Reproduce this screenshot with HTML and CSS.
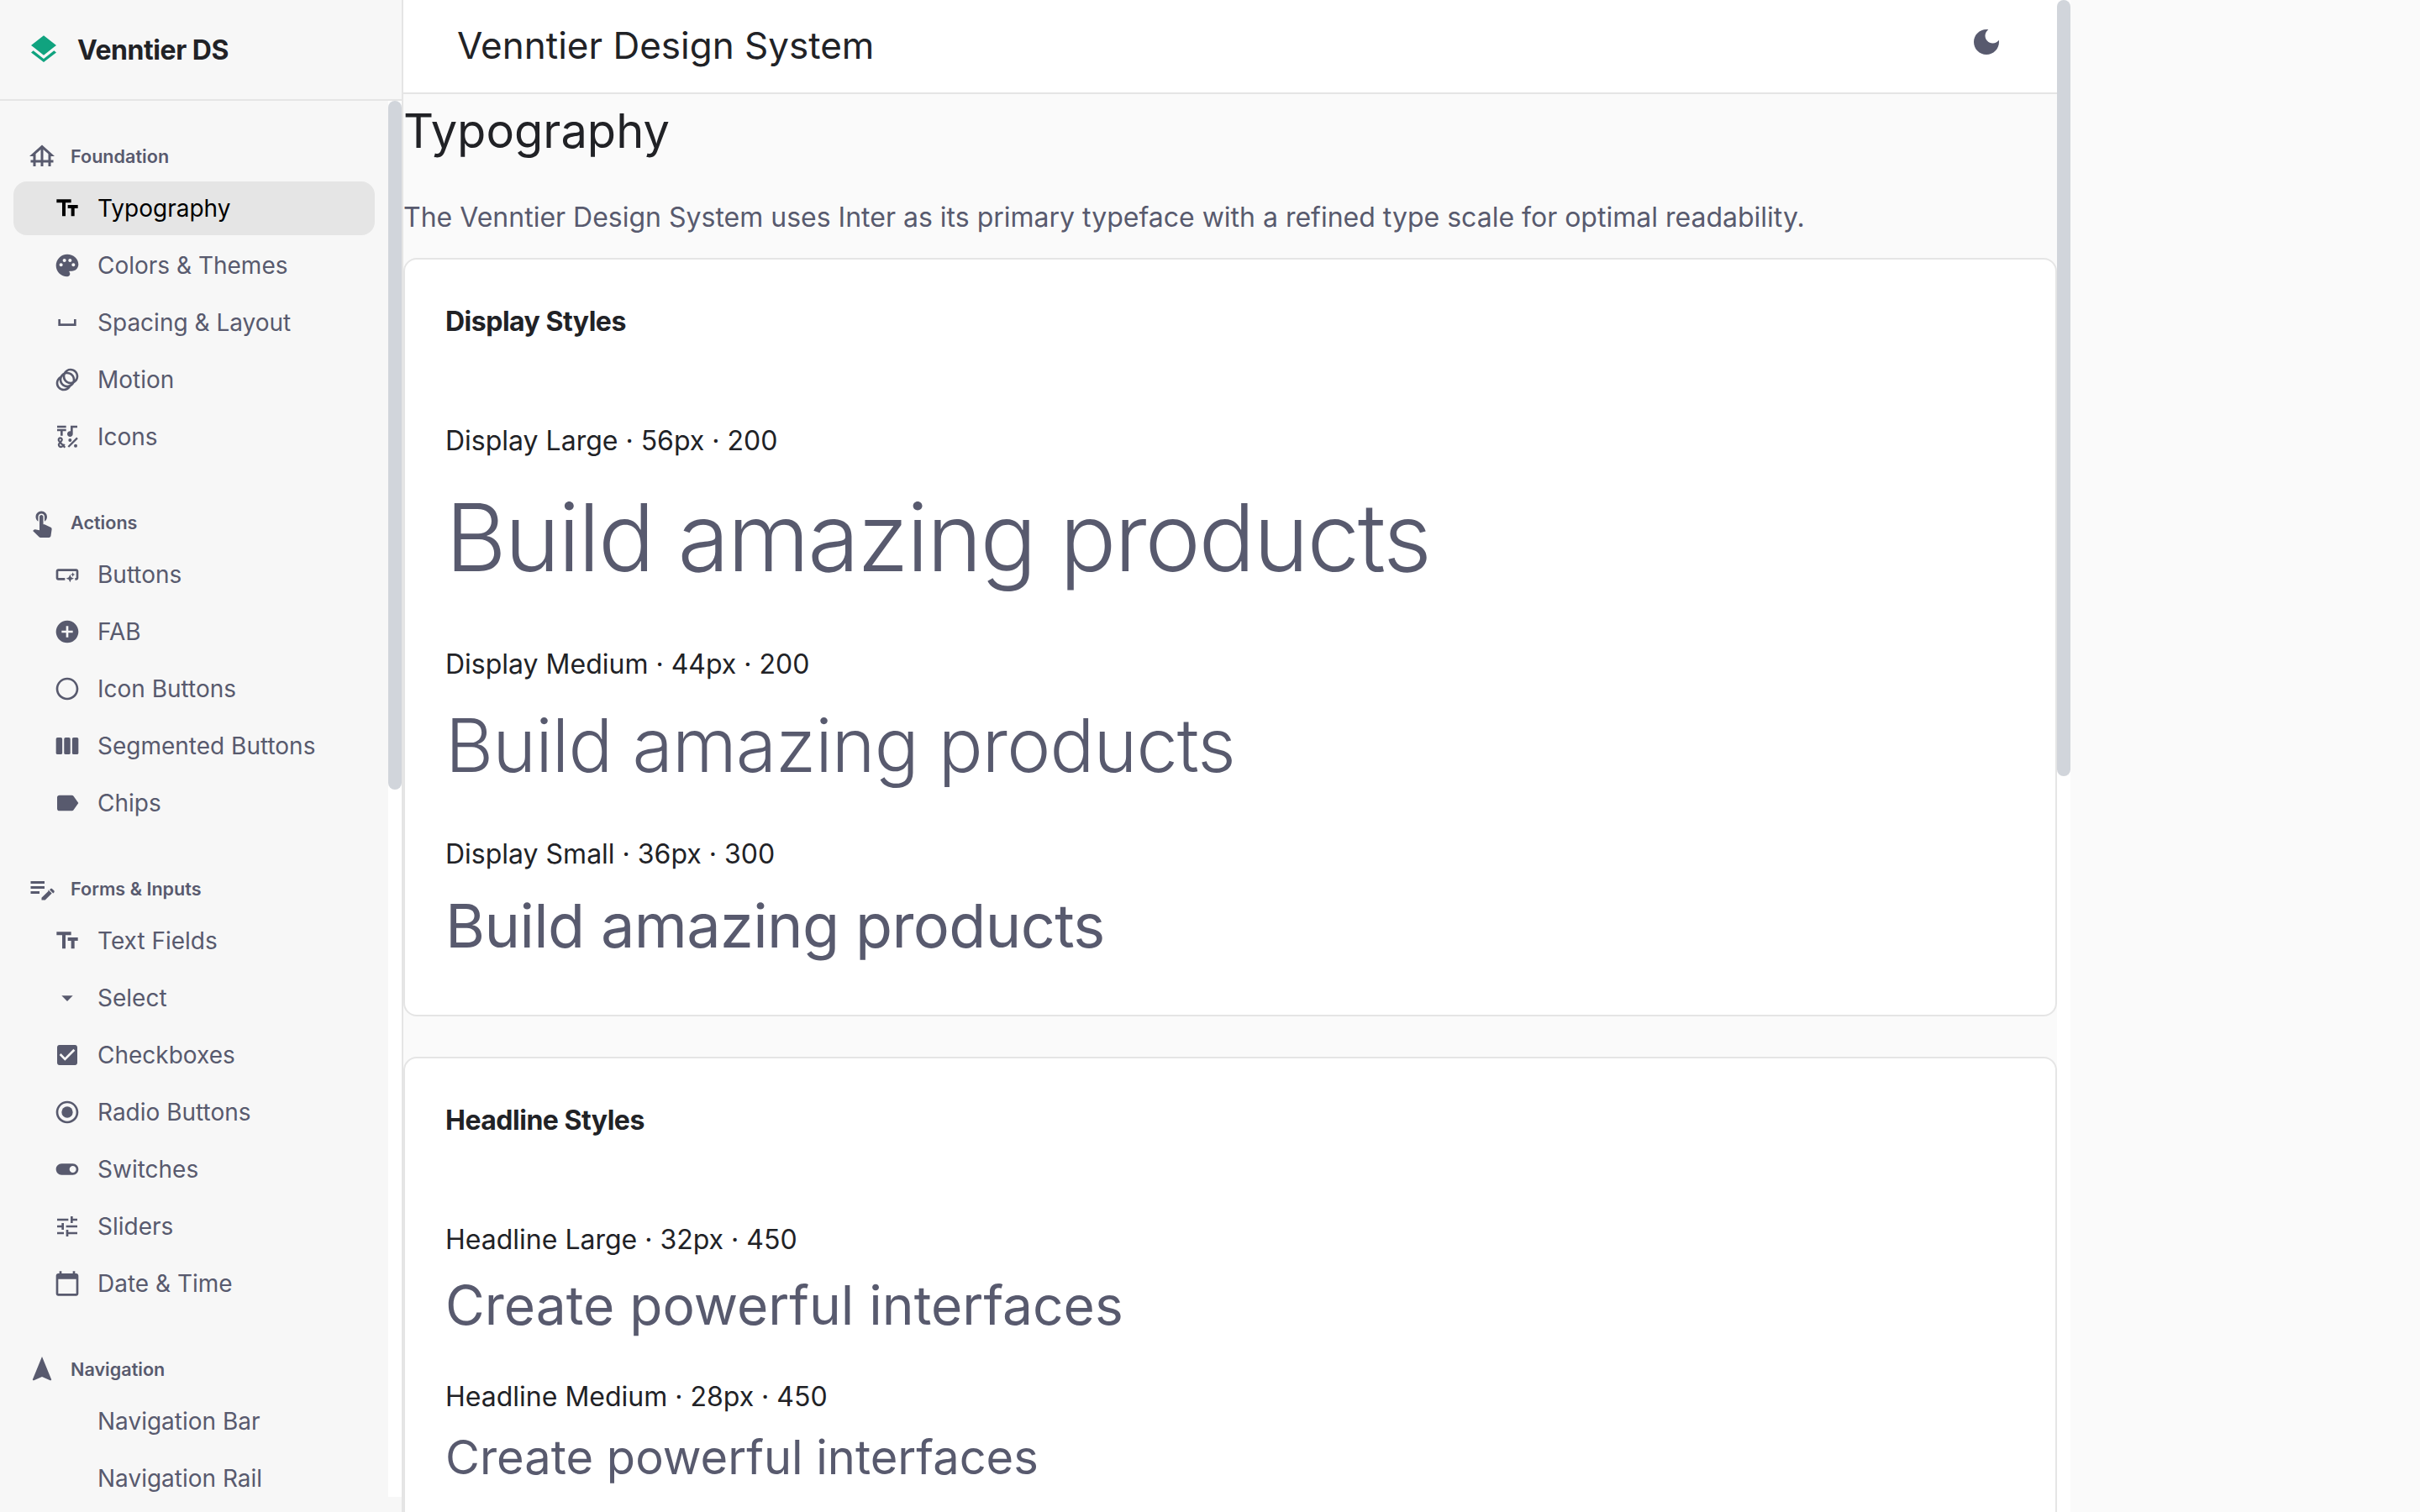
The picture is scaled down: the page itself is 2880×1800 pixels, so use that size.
FILE: index.html
```html
<!DOCTYPE html>
<html lang="en">
<head>
  <meta charset="UTF-8">
  <meta name="viewport" content="width=device-width, initial-scale=1.0">
  <title>Venntier Design System</title>
  <link rel="stylesheet" href="styles.css">
</head>
<body>
  <aside class="sidebar">
    <div class="brand">
      <svg class="brand-icon" viewBox="0 0 24 24"><path d="M11.99 18.54l-7.37-5.73L3 14.07l9 7 9-7-1.63-1.27-7.38 5.74zM12 16l7.36-5.73L21 9l-9-7-9 7 1.63 1.27L12 16z"/></svg>
      <span class="brand-name">Venntier DS</span>
    </div>
    <div class="sidebar-body">
      <nav class="nav">
        <section class="nav-section">
          <div class="nav-label"><svg class="label-icon" viewBox="0 0 24 24"><path d="M19 12h3L12 3 2 12h3v3H3v2h2v3h2v-3h4v3h2v-3h4v3h2v-3h2v-2h-2v-3zM7 15v-4.81l4-3.6V15H7zm6 0V6.59l4 3.6V15h-4z"/></svg>Foundation</div>
          <a class="nav-item active"><svg class="icon" viewBox="0 0 24 24"><path d="M2.5 4v3h5v12h3V7h5V4h-13zm19 5h-9v3h3v7h3v-7h3V9z"/></svg>Typography</a>
          <a class="nav-item"><svg class="icon" viewBox="0 0 24 24"><path d="M12 2C6.49 2 2 6.49 2 12s4.49 10 10 10c1.38 0 2.5-1.12 2.5-2.5 0-.61-.23-1.2-.64-1.67-.08-.1-.13-.21-.13-.33 0-.28.22-.5.5-.5H16c3.31 0 6-2.69 6-6 0-4.96-4.49-9-10-9zm5.5 11c-.83 0-1.5-.67-1.5-1.5s.67-1.5 1.5-1.5 1.5.67 1.5 1.5-.67 1.5-1.5 1.5zm-3-4c-.83 0-1.5-.67-1.5-1.5S13.67 6 14.5 6s1.5.67 1.5 1.5S15.33 9 14.5 9zM5 11.5c0-.83.67-1.5 1.5-1.5s1.5.67 1.5 1.5S7.33 13 6.5 13 5 12.33 5 11.5zm6-4c0 .83-.67 1.5-1.5 1.5S8 8.33 8 7.5 8.67 6 9.5 6s1.5.67 1.5 1.5z"/></svg>Colors &amp; Themes</a>
          <a class="nav-item"><svg class="icon" viewBox="0 0 24 24"><path d="M18 9v4H6V9H4v6h16V9h-2z"/></svg>Spacing &amp; Layout</a>
          <a class="nav-item"><svg class="icon" viewBox="0 0 24 24"><path d="M15 2c-2.71 0-5.05 1.54-6.22 3.78-1.28.67-2.34 1.72-3 3C3.54 9.95 2 12.29 2 15c0 3.87 3.13 7 7 7 2.71 0 5.05-1.54 6.22-3.78 1.28-.67 2.34-1.72 3-3C20.46 14.05 22 11.71 22 9c0-3.87-3.13-7-7-7zM9 20c-2.76 0-5-2.24-5-5 0-1.12.37-2.16 1-3 0 3.87 3.13 7 7 7-.84.63-1.88 1-3 1zm3-3c-2.76 0-5-2.24-5-5 0-1.12.37-2.16 1-3 0 3.86 3.13 6.99 7 7-.84.63-1.88 1-3 1zm4.7-3.3c-.53.19-1.1.3-1.7.3-2.76 0-5-2.24-5-5 0-.6.11-1.17.3-1.7.53-.19 1.1-.3 1.7-.3 2.76 0 5 2.24 5 5 0 .6-.11 1.17-.3 1.7zM19 12c0-3.86-3.13-6.99-7-7 .84-.63 1.87-1 3-1 2.76 0 5 2.24 5 5 0 1.12-.37 2.16-1 3z"/></svg>Motion</a>
          <a class="nav-item"><svg class="icon" viewBox="0 0 24 24"><path d="M3 2h8v2H3zM3 5h8v2H8v4H6V7H3zM15 2h6v2h-4v5.5c0 1.38-1.12 2.5-2.5 2.5S12 10.88 12 9.5 13.12 7 14.5 7c.17 0 .34.02.5.05z"/><circle cx="14.5" cy="15" r="1.5"/><circle cx="19.5" cy="20" r="1.5"/><path class="icon-line" d="M13 21l8-8M10 21.5l-5.2-5.6c-1-1.1-.4-2.9 1-2.9s2 1.7 1 2.8l-2 2.3c-.9 1.2 0 2.9 1.6 2.9 1.1 0 2.1-.6 3.1-2.4"/></svg>Icons</a>
        </section>
        <section class="nav-section">
          <div class="nav-label"><svg class="label-icon" viewBox="0 0 24 24"><path d="M9 11.24V7.5C9 6.12 10.12 5 11.5 5S14 6.12 14 7.5v3.74c1.21-.81 2-2.18 2-3.74C16 5.01 13.99 3 11.5 3S7 5.01 7 7.5c0 1.56.79 2.93 2 3.74zm9.84 4.63l-4.54-2.26c-.17-.07-.35-.11-.54-.11H13v-6c0-.83-.67-1.5-1.5-1.5S10 6.67 10 7.5v10.74l-3.43-.72c-.08-.01-.15-.03-.24-.03-.31 0-.59.13-.79.33l-.79.8 4.94 4.94c.27.27.65.44 1.06.44h6.79c.75 0 1.33-.55 1.44-1.28l.75-5.27c.01-.07.02-.14.02-.2 0-.62-.38-1.16-.91-1.38z"/></svg>Actions</div>
          <a class="nav-item"><svg class="icon" viewBox="0 0 24 24"><path d="M22 9v6c0 1.1-.9 2-2 2h-1v-2h1V9H4v6h6v2H4c-1.1 0-2-.9-2-2V9c0-1.1.9-2 2-2h16c1.1 0 2 .9 2 2zm-7.5 10l1.09-2.41L18 15.5l-2.41-1.09L14.5 12l-1.09 2.41L11 15.5l2.41 1.09L14.5 19zm2.5-5l.62-1.38L19 12l-1.38-.62L17 10l-.62 1.38L15 12l1.38.62L17 14z"/></svg>Buttons</a>
          <a class="nav-item"><svg class="icon" viewBox="0 0 24 24"><path d="M12 2C6.48 2 2 6.48 2 12s4.48 10 10 10 10-4.48 10-10S17.52 2 12 2zm5 11h-4v4h-2v-4H7v-2h4V7h2v4h4v2z"/></svg>FAB</a>
          <a class="nav-item"><svg class="icon" viewBox="0 0 24 24"><path d="M12 2C6.48 2 2 6.48 2 12s4.48 10 10 10 10-4.48 10-10S17.52 2 12 2zm0 18c-4.42 0-8-3.58-8-8s3.58-8 8-8 8 3.58 8 8-3.58 8-8 8z"/></svg>Icon Buttons</a>
          <a class="nav-item"><svg class="icon" viewBox="0 0 24 24"><rect x="2" y="4.5" width="5.6" height="15" rx="1.4"/><rect x="9.2" y="4.5" width="5.6" height="15" rx="1.4"/><rect x="16.4" y="4.5" width="5.6" height="15" rx="1.4"/></svg>Segmented Buttons</a>
          <a class="nav-item"><svg class="icon" viewBox="0 0 24 24"><path d="M17.63 5.84C17.27 5.33 16.67 5 16 5L5 5.01C3.9 5.01 3 5.9 3 7v10c0 1.1.9 1.99 2 1.99L16 19c.67 0 1.27-.33 1.63-.84L22 12l-4.37-6.16z"/></svg>Chips</a>
        </section>
        <section class="nav-section">
          <div class="nav-label"><svg class="label-icon" viewBox="0 0 24 24"><path d="M3 10h11v2H3v-2zm0-2h11V6H3v2zm0 8h7v-2H3v2zm15.01-3.13l.71-.71c.39-.39 1.02-.39 1.41 0l1.41 1.41c.39.39.39 1.02 0 1.41l-.71.71-2.82-2.82zm-1.06 1.06l-5.3 5.3V21h2.83l5.3-5.3-2.83-2.83z"/></svg>Forms &amp; Inputs</div>
          <a class="nav-item"><svg class="icon" viewBox="0 0 24 24"><path d="M2.5 4v3h5v12h3V7h5V4h-13zm19 5h-9v3h3v7h3v-7h3V9z"/></svg>Text Fields</a>
          <a class="nav-item"><svg class="icon" viewBox="0 0 24 24"><path d="M7 10l5 5 5-5z"/></svg>Select</a>
          <a class="nav-item"><svg class="icon" viewBox="0 0 24 24"><path d="M19 3H5c-1.11 0-2 .9-2 2v14c0 1.1.89 2 2 2h14c1.11 0 2-.9 2-2V5c0-1.1-.89-2-2-2zm-9 14l-5-5 1.41-1.41L10 14.17l7.59-7.59L19 8l-9 9z"/></svg>Checkboxes</a>
          <a class="nav-item"><svg class="icon" viewBox="0 0 24 24"><path d="M12 2C6.48 2 2 6.48 2 12s4.48 10 10 10 10-4.48 10-10S17.52 2 12 2zm0 18c-4.42 0-8-3.58-8-8s3.58-8 8-8 8 3.58 8 8-3.58 8-8 8z"/><circle cx="12" cy="12" r="5"/></svg>Radio Buttons</a>
          <a class="nav-item"><svg class="icon" viewBox="0 0 24 24"><path d="M17 7H7c-2.76 0-5 2.24-5 5s2.24 5 5 5h10c2.76 0 5-2.24 5-5s-2.24-5-5-5zm0 8c-1.66 0-3-1.34-3-3s1.34-3 3-3 3 1.34 3 3-1.34 3-3 3z"/></svg>Switches</a>
          <a class="nav-item"><svg class="icon" viewBox="0 0 24 24"><path d="M3 17v2h6v-2H3zM3 5v2h10V5H3zm10 16v-2h8v-2h-8v-2h-2v6h2zM7 9v2H3v2h4v2h2V9H7zm14 4v-2H11v2h10zm-6-4h2V7h4V5h-4V3h-2v6z"/></svg>Sliders</a>
          <a class="nav-item"><svg class="icon" viewBox="0 0 24 24"><path d="M20 3h-1V1h-2v2H7V1H5v2H4c-1.1 0-2 .9-2 2v16c0 1.1.9 2 2 2h16c1.1 0 2-.9 2-2V5c0-1.1-.9-2-2-2zm0 18H4V8h16v13z"/></svg>Date &amp; Time</a>
        </section>
        <section class="nav-section">
          <div class="nav-label"><svg class="label-icon" viewBox="0 0 24 24"><path d="M12 2L4.5 20.29l.71.71L12 18l6.79 3 .71-.71z"/></svg>Navigation</div>
          <a class="nav-item"><span class="icon"></span>Navigation Bar</a>
          <a class="nav-item"><span class="icon"></span>Navigation Rail</a>
        </section>
      </nav>
      <div class="scrollbar"><div class="thumb side-thumb"></div></div>
    </div>
  </aside>

  <div class="main">
    <div class="main-column">
      <header class="topbar">
        <span class="topbar-title">Venntier Design System</span>
        <svg class="theme-icon" viewBox="0 0 24 24"><path d="M12 3c-4.97 0-9 4.03-9 9s4.03 9 9 9 9-4.03 9-9c0-.46-.04-.92-.1-1.36-.98 1.37-2.58 2.26-4.4 2.26-2.98 0-5.4-2.42-5.4-5.4 0-1.81.89-3.42 2.26-4.4-.44-.06-.9-.1-1.36-.1z"/></svg>
      </header>
      <main class="content">
        <h1>Typography</h1>
        <p class="intro">The Venntier Design System uses Inter as its primary typeface with a refined type scale for optimal readability.</p>

        <section class="card">
          <h2>Display Styles</h2>
          <div class="spec display-lg">
            <div class="spec-label">Display Large · 56px · 200</div>
            <div class="spec-sample">Build amazing products</div>
          </div>
          <div class="spec display-md">
            <div class="spec-label">Display Medium · 44px · 200</div>
            <div class="spec-sample">Build amazing products</div>
          </div>
          <div class="spec display-sm">
            <div class="spec-label">Display Small · 36px · 300</div>
            <div class="spec-sample">Build amazing products</div>
          </div>
        </section>

        <section class="card">
          <h2>Headline Styles</h2>
          <div class="spec headline-lg">
            <div class="spec-label">Headline Large · 32px · 450</div>
            <div class="spec-sample">Create powerful interfaces</div>
          </div>
          <div class="spec headline-md">
            <div class="spec-label">Headline Medium · 28px · 450</div>
            <div class="spec-sample">Create powerful interfaces</div>
          </div>
        </section>
      </main>
    </div>
    <div class="scrollbar"><div class="thumb main-thumb"></div></div>
  </div>
</body>
</html>
```

FILE: styles.css
```css
* {
  box-sizing: border-box;
  margin: 0;
  padding: 0;
}
body {
  display: flex;
  height: 100vh;
  overflow: hidden;
  background: #fafafa;
  color: #212226;
  font-family: Inter, "Liberation Sans", sans-serif;
}
svg {
  fill: currentColor;
}

/* Sidebar */
.sidebar {
  display: flex;
  flex-direction: column;
  flex: none;
  width: 480px;
  height: 100%;
  background: #f7f7f7;
  border-right: 2px solid #e5e5e5;
}
.brand {
  display: flex;
  align-items: center;
  flex: none;
  height: 120px;
  padding-left: 32px;
  gap: 20px;
  border-bottom: 2px solid #e5e5e5;
}
.brand-icon {
  width: 40px;
  height: 40px;
  color: #10a37f;
}
.brand-name {
  font-size: 32px;
  font-weight: 700;
  letter-spacing: -0.45px;
}
.sidebar-body {
  display: flex;
  flex: none;
  height: 1662px;
}
.nav {
  flex: 1;
  overflow: hidden;
  padding-top: 38px;
}
.nav-section {
  margin-bottom: 42px;
}
.nav-label {
  display: flex;
  align-items: center;
  gap: 16px;
  height: 56px;
  margin-bottom: 2px;
  padding-left: 32px;
  color: #585a6e;
  font-size: 21.6px;
  font-weight: 600;
}
.nav-item {
  display: flex;
  align-items: center;
  gap: 20px;
  height: 64px;
  margin: 0 16px 4px;
  padding-left: 48px;
  border-radius: 16px;
  color: #585a6e;
  font-size: 28px;
}
.nav-item.active {
  background: #e5e5e5;
  color: #000;
}
.icon {
  flex: none;
  width: 32px;
  height: 32px;
}
.label-icon {
  flex: none;
  width: 36px;
  height: 36px;
}
.icon-line {
  fill: none;
  stroke: currentColor;
  stroke-width: 1.7;
}

/* Scrollbars */
.scrollbar {
  flex: none;
  width: 16px;
  height: 100%;
  background: #fff;
}
.thumb {
  width: 100%;
  background: #d1d5db;
  border-radius: 8px;
}
.side-thumb {
  height: 820px;
}
.main-thumb {
  height: 924px;
}

/* Main */
.main {
  display: flex;
  flex: none;
  width: 1984px;
  height: 100%;
}
.main-column {
  flex: none;
  width: 1968px;
  height: 100%;
  overflow: hidden;
}
.topbar {
  display: flex;
  align-items: center;
  justify-content: space-between;
  height: 112px;
  padding: 0 64px 2px;
  background: #fff;
  border-bottom: 2px solid #e5e5e5;
}
.topbar-title {
  font-size: 44px;
  font-weight: 400;
}
.theme-icon {
  width: 40px;
  height: 40px;
  margin-bottom: 8px;
  color: #585a6e;
}
h1 {
  margin-top: 10px;
  font-size: 56px;
  font-weight: 400;
  line-height: 68px;
}
.intro {
  margin-top: 45px;
  margin-bottom: 24px;
  color: #585a6e;
  font-size: 32px;
  line-height: 48px;
}
.card {
  margin-bottom: 48px;
  padding: 50px 48px 48px;
  background: #fff;
  border: 2px solid #e5e5e5;
  border-radius: 16px;
}
h2 {
  margin-bottom: 94px;
  font-size: 32px;
  font-weight: 700;
  letter-spacing: -0.5px;
  line-height: 48px;
}
.spec-label {
  margin-bottom: 16px;
  font-size: 32px;
  line-height: 48px;
}
.spec-sample {
  color: #585a6e;
}
.display-lg {
  margin-bottom: 54px;
}
.display-lg .spec-sample {
  font-size: 112px;
  font-weight: 300;
  letter-spacing: -2.24px;
  line-height: 148px;
}
.display-md {
  margin-bottom: 50px;
}
.display-md .spec-sample {
  font-size: 88px;
  font-weight: 300;
  letter-spacing: -0.88px;
  line-height: 112px;
}
.display-sm {
  margin-bottom: 13px;
}
.display-sm .spec-sample {
  font-size: 72px;
  font-weight: 400;
  letter-spacing: -0.64px;
  line-height: 90px;
}
.headline-lg {
  margin-bottom: 47px;
}
.headline-lg .spec-sample {
  font-size: 64px;
  font-weight: 400;
  line-height: 76px;
}
.headline-md .spec-sample {
  font-size: 56px;
  font-weight: 400;
  line-height: 64px;
}
```
